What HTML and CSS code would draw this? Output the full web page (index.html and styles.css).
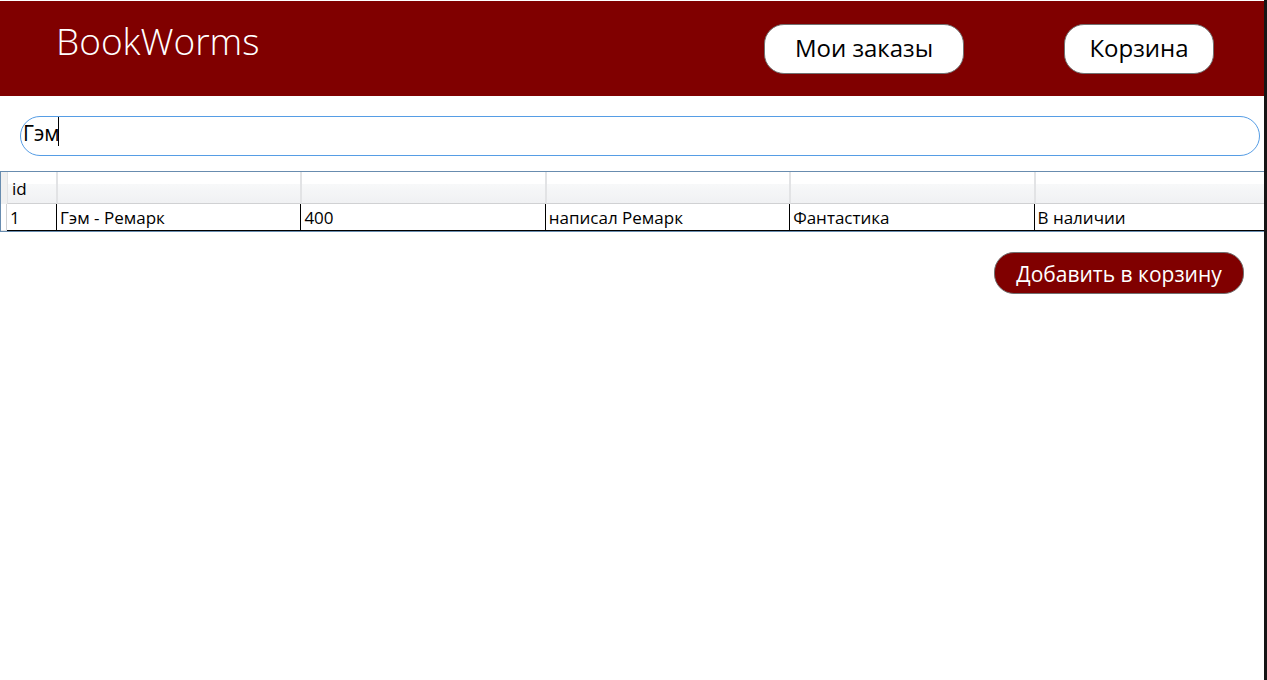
FILE: index.html
```
<!DOCTYPE html>
<html lang="ru">
<head>
<meta charset="utf-8">
<title>BookWorms</title>
<link rel="stylesheet" href="styles.css">
</head>
<body>
<header class="header">
  <h1 class="brand">BookWorms</h1>
  <nav class="actions">
    <button class="nav-button nav-orders" type="button">Мои заказы</button>
    <button class="nav-button nav-cart" type="button">Корзина</button>
  </nav>
</header>
<main>
  <div class="search">
    <input class="search-input" type="text" value="Гэм" aria-label="Поиск">
    <span class="caret"></span>
  </div>
  <table class="books">
    <colgroup>
      <col class="col-handle">
      <col class="col-id">
      <col class="col-data">
      <col class="col-data">
      <col class="col-data">
      <col class="col-data">
      <col>
    </colgroup>
    <thead>
      <tr><td class="corner"></td><th>id</th><th></th><th></th><th></th><th></th><th></th></tr>
    </thead>
    <tbody>
      <tr><td class="handle"></td><td>1</td><td>Гэм - Ремарк</td><td>400</td><td>написал Ремарк</td><td>Фантастика</td><td>В наличии</td></tr>
    </tbody>
  </table>
  <div class="footer">
    <button class="add-button" type="button">Добавить в корзину</button>
  </div>
</main>
</body>
</html>
```
FILE: styles.css
```
* {
  box-sizing: border-box;
}

body {
  margin: 0;
  min-height: 100vh;
  border-right: 3px solid #151515;
  background: #fff;
  color: #000;
  font-family: "Open Sans", "Noto Sans", sans-serif;
}

.header {
  display: flex;
  justify-content: space-between;
  align-items: flex-start;
  height: 96px;
  padding: 16px 50px 0 56px;
  border-top: 1px solid #fff;
  background: #800000;
  background-clip: padding-box;
}

.brand {
  margin: 0;
  color: #fff;
  font-size: 37px;
  font-weight: 300;
  line-height: 48px;
}

.actions {
  display: flex;
  gap: 100px;
  padding-top: 7px;
}

.nav-button {
  height: 50px;
  padding: 0 0 4px;
  border: 1px solid #707070;
  border-radius: 20px;
  background: #fff;
  color: #000;
  font-family: inherit;
  font-size: 24px;
}

.nav-orders {
  width: 200px;
}

.nav-cart {
  width: 150px;
}

.search {
  position: relative;
  margin: 20px 4px 15px 20px;
}

.search-input {
  display: block;
  width: 100%;
  height: 40px;
  padding: 0 2px 6px;
  border: 1px solid #569de5;
  border-radius: 20px;
  outline: none;
  background: #fff;
  color: #000;
  font-family: inherit;
  font-size: 21px;
}

.caret {
  position: absolute;
  top: 1px;
  left: 38px;
  width: 1px;
  height: 29px;
  background: #000;
}

.books {
  width: 100%;
  table-layout: fixed;
  border-collapse: separate;
  border-spacing: 0;
  border: solid #688caf;
  border-width: 1px 0 1px 1px;
  font-size: 17px;
  line-height: 24px;
}

.books th,
.books td {
  padding: 0 3px;
  text-align: left;
  white-space: nowrap;
}

.books th {
  height: 32px;
  padding: 2px 4px 0;
  border: solid #e2e3e5;
  border-width: 0 1px;
  border-bottom: 1px solid #d0d1d3;
  background: linear-gradient(#fff 0 40%, #f7f8f9 40%, #f0f1f3 100%);
  font-weight: 400;
}

.books tbody td {
  height: 27px;
  padding-top: 2px;
  border-right: 1px solid #000;
  border-bottom: 1px solid #000;
}

.books th:last-child,
.books tbody td:last-child {
  border-right: 0;
}

.books .corner {
  background: #f0f0f0;
}

.books tbody .handle {
  border-right: 1px solid #d0d1d3;
  border-bottom: 1px solid #e2e3e5;
}

.col-handle {
  width: 6px;
}

.col-id {
  width: 50px;
}

.col-data {
  width: 19.35%;
}

.footer {
  display: flex;
  justify-content: flex-end;
  padding: 20px 20px 0;
}

.add-button {
  width: 250px;
  height: 42px;
  padding: 2px 0 0;
  border: 1px solid #707070;
  border-radius: 20px;
  background: #800000;
  color: #fff;
  font-family: inherit;
  font-size: 21px;
}
```
